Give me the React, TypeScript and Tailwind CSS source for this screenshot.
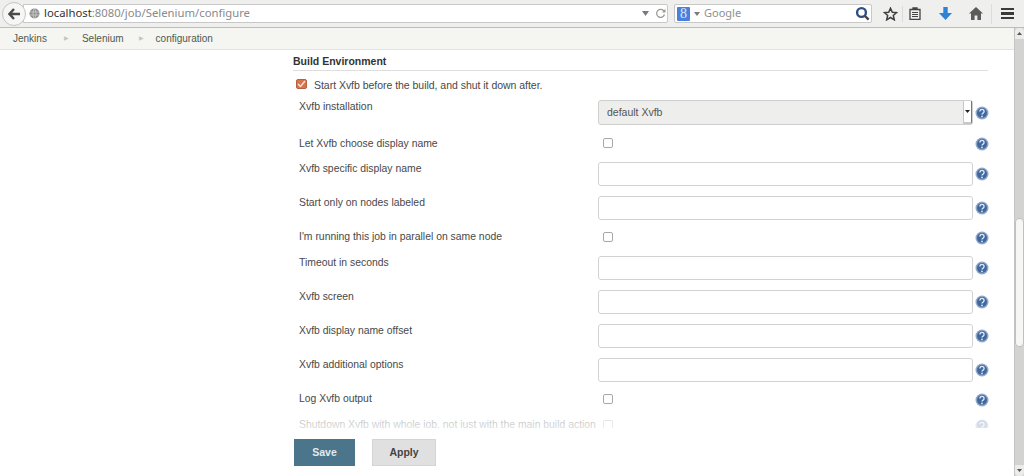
import React from 'react';

function HelpIcon() {
  return (
    <svg width="14" height="14" viewBox="0 0 14 14" className="shrink-0">
      <circle cx="7" cy="7" r="6.5" fill="#8fa6c9" />
      <circle cx="7" cy="7" r="5" fill="#3f689f" />
      <path d="M4.9 5.4a2.1 2 0 1 1 3.2 1.7c-.7.4-1.1.8-1.1 1.5" fill="none" stroke="#dfe8f3" strokeWidth="1.4" />
      <circle cx="7" cy="10.4" r="0.9" fill="#dfe8f3" />
    </svg>
  );
}

function Checkbox() {
  return <span className="block w-[10px] h-[10px] border border-[#a8a8a8] rounded-[2px] bg-white" />;
}

// input rows are 34px apart, checkbox rows sit in whatever is left
function Row({ label, kind, height, labelPad }: { label: string; kind: 'input' | 'check'; height: string; labelPad: string }) {
  return (
    <div className={`flex ${height}`}>
      <div className={`w-[299px] ${labelPad} leading-[13px] text-[10.4px] text-[#484848] whitespace-nowrap`}>{label}</div>
      {kind === 'input' ? (
        <>
          <div className="w-[375px] h-[24px] border border-[#d2d2d2] rounded-[3px] bg-white" />
          <div className="ml-[2px] pt-[5px]"><HelpIcon /></div>
        </>
      ) : (
        <>
          <div className="w-[375px] pl-[5px] pt-[2px]"><Checkbox /></div>
          <div className="ml-[2px] pt-px"><HelpIcon /></div>
        </>
      )}
    </div>
  );
}

export default function App() {
  return (
    <div className="h-[476px] w-[1024px] overflow-hidden flex flex-col bg-white font-['Liberation_Sans',Arial,sans-serif] text-[10.5px]">
      {/* browser toolbar */}
      <div className="h-[28px] shrink-0 flex items-center bg-[#efefee] border-b border-[#bdbdbb] pr-[9px]">
        <div className="ml-[2px] w-[24px] h-[24px] rounded-full border border-[#c4c4c4] bg-[#f6f6f5] flex items-center justify-center z-10">
          <svg width="13" height="12" viewBox="0 0 13 12">
            <path d="M6 1 1.5 6 6 11M2 6h10" fill="none" stroke="#4a4a4a" strokeWidth="2.4" />
          </svg>
        </div>
        <div className="ml-[-3px] w-[645px] h-[19px] flex items-center bg-white border border-[#c8c8c8] rounded-r-[2px] pl-[5px] pr-[1px]">
          <svg width="11" height="11" viewBox="0 0 11 11">
            <circle cx="5.5" cy="5.5" r="5" fill="#8c8c8c" />
            <path d="M1 4h9M1 7h9M5.5.5c-2 3-2 7 0 10M5.5.5c2 3 2 7 0 10" fill="none" stroke="#d8d8d8" strokeWidth="0.7" />
          </svg>
          <div className="ml-[4px] text-[11.3px] font-['Noto_Sans',sans-serif] flex-1 whitespace-nowrap">
            <span className="text-[#333]">localhost</span>
            <span className="text-[#8a8a8a]">:8080/job/Selenium/configure</span>
          </div>
          <svg width="7" height="5" viewBox="0 0 7 5" className="mr-[6px]"><path d="M0 0h7L3.5 5z" fill="#7a7a7a" /></svg>
          <svg width="11" height="11" viewBox="0 0 11 11">
            <path d="M9 3.2A4 4 0 1 0 9.5 6.5" fill="none" stroke="#9a9a9a" strokeWidth="1.3" />
            <path d="M10.5 0.8V4.5H7z" fill="#9a9a9a" />
          </svg>
        </div>
        <div className="ml-[6px] w-[198px] h-[19px] flex items-center bg-white border border-[#c8c8c8] rounded-[2px] pl-[2px] pr-[1px]">
          <span className="w-[13px] h-[14px] bg-[#4a7fdb] text-[#dfe9fa] rounded-[1px] flex items-center justify-center text-[14px] font-['Liberation_Serif',serif]">8</span>
          <svg width="6" height="4" viewBox="0 0 6 4" className="ml-[4px]"><path d="M0 0h6L3 4z" fill="#7a7a7a" /></svg>
          <span className="ml-[4px] flex-1 text-[11px] text-[#8f8f8f] font-['Noto_Sans',sans-serif]">Google</span>
          <svg width="15" height="15" viewBox="0 0 15 15">
            <circle cx="6.5" cy="6.5" r="4.4" fill="#fff" stroke="#2f4d84" strokeWidth="2.4" />
            <path d="M10 10l3.6 3.6" stroke="#444" strokeWidth="2.4" />
          </svg>
        </div>
        <svg width="15" height="14" viewBox="0 0 15 14" className="ml-[11px]">
          <path d="M7.5 1.2 9.3 5.2l4.3.4-3.3 2.9 1 4.3-3.8-2.3-3.8 2.3 1-4.3L1.4 5.6l4.3-.4z" fill="none" stroke="#3f3f3f" strokeWidth="1.5" />
        </svg>
        <div className="ml-[4px] w-px h-[16px] bg-[#dcdcdc]" />
        <svg width="12" height="13" viewBox="0 0 12 13" className="ml-[6px]">
          <path d="M4 2h4V1H4zM1 2.5h10v10H1z" fill="none" stroke="#444" strokeWidth="1.3" />
          <path d="M3 5.5h6M3 7.5h6M3 9.5h6" stroke="#444" strokeWidth="1.2" />
        </svg>
        <svg width="13" height="13" viewBox="0 0 13 13" className="ml-[18px]">
          <path d="M4.3 0h4.4v6H13L6.5 13 0 6h4.3z" fill="#2f83d6" />
        </svg>
        <svg width="14" height="13" viewBox="0 0 14 13" className="ml-[17px]">
          <path d="M7 0 0 6.5h2V13h3.6V8.5h2.8V13H12V6.5h2z" fill="#5c5c5c" />
        </svg>
        <div className="ml-[8px] w-px h-[20px] bg-[#dcdcdc]" />
        <div className="ml-[9px] w-[13px] flex flex-col gap-[2px]">
          <span className="h-[2.5px] bg-[#3a3a3a]" />
          <span className="h-[2.5px] bg-[#3a3a3a]" />
          <span className="h-[2.5px] bg-[#3a3a3a]" />
        </div>
      </div>

      <div className="flex-1 min-h-0 flex">
        <div className="flex-1 min-w-0 flex flex-col">
          {/* breadcrumb */}
          <div className="h-[22px] shrink-0 flex items-center bg-[#f5f6f1] border-b border-[#e3e5dc] pl-[13px] text-[10px] text-[#4f5a4f]">
            <span>Jenkins</span>
            <span className="ml-[17px] text-[6px] text-[#c4c4c4]">▶</span>
            <span className="ml-[13px]">Selenium</span>
            <span className="ml-[15px] text-[6px] text-[#c4c4c4]">▶</span>
            <span className="ml-[12px]">configuration</span>
          </div>

          {/* form, clipped at the sticky button bar */}
          <div className="relative h-[378px] shrink-0 overflow-hidden pl-[293px]">
            <div className="pt-[5px] h-[15px] box-content font-bold text-[#333] border-b border-[#dedede] w-[695px] leading-[12px] pb-0">Build Environment</div>
            <div className="flex items-center h-[29px] pl-[3px]">
              <span className="w-[11px] h-[10px] -mt-[3px] rounded-[2px] bg-[#d9734c] border border-[#b85f3d] flex items-center justify-center">
                <svg width="9" height="8" viewBox="0 0 9 8"><path d="M1 4l2.5 2.5L8 1" fill="none" stroke="#f6e3da" strokeWidth="1.5" /></svg>
              </span>
              <span className="ml-[7px] text-[#484848] tracking-[-0.03px]">Start Xvfb before the build, and shut it down after.</span>
            </div>
            <div className="pl-[6px]">
              <div className="flex h-[36px]">
                <div className="w-[299px] leading-[13px] text-[#484848]">Xvfb installation</div>
                <div className="w-[375px] h-[25px] flex items-center justify-between bg-[#eeeeec] border border-[#cfcfcf] rounded-[3px] pl-[8px] text-[#555]">
                  default Xvfb
                  <span className="h-full w-[9px] bg-white border-l border-r border-b-2 border-[#c8c8c8] border-r-[#777] flex items-center justify-center">
                    <svg width="5" height="3" viewBox="0 0 5 3"><path d="M0 0h5L2.5 3z" fill="#222" /></svg>
                  </span>
                </div>
                <div className="ml-[2px] pt-[6px]"><HelpIcon /></div>
              </div>
              <Row label="Let Xvfb choose display name" kind="check" height="h-[26px]" labelPad="pt-[1px]" />
              <Row label="Xvfb specific display name" kind="input" height="h-[34px]" labelPad="pt-0" />
              <Row label="Start only on nodes labeled" kind="input" height="h-[34px]" labelPad="pt-0" />
              <Row label="I'm running this job in parallel on same node" kind="check" height="h-[26px]" labelPad="pt-0" />
              <Row label="Timeout in seconds" kind="input" height="h-[34px]" labelPad="pt-0" />
              <Row label="Xvfb screen" kind="input" height="h-[34px]" labelPad="pt-0" />
              <Row label="Xvfb display name offset" kind="input" height="h-[34px]" labelPad="pt-0" />
              <Row label="Xvfb additional options" kind="input" height="h-[34px]" labelPad="pt-0" />
              <Row label="Log Xvfb output" kind="check" height="h-[26px]" labelPad="pt-0" />
              <Row label="Shutdown Xvfb with whole job, not just with the main build action" kind="check" height="h-[26px]" labelPad="pt-0" />
            </div>
            <div className="absolute left-0 right-0 bottom-0 h-[14px] bg-gradient-to-b from-white/60 to-white/80" />
          </div>

          {/* button bar */}
          <div className="flex-1 flex items-start pl-[294px] pt-[11px] gap-[17px] bg-white">
            <div className="w-[61px] h-[27px] flex items-center justify-center bg-[#4b758b] font-bold text-[#e3eaee]">Save</div>
            <div className="w-[64px] h-[27px] flex items-center justify-center bg-[#e0e0e0] border border-[#d4d4d4] font-bold text-[#444]">Apply</div>
          </div>
        </div>

        {/* scrollbar */}
        <div className="w-[10px] shrink-0 bg-[#d3d3d1] border-l border-[#c4c4c4] flex flex-col">
          <div className="h-[11px] bg-[#ececeb] rounded-t-[4px] flex items-center justify-center">
            <svg width="5" height="3" viewBox="0 0 5 3"><path d="M0 3h5L2.5 0z" fill="#555" /></svg>
          </div>
          <div className="mt-[179px] h-[129px] bg-[#f6f6f5] border border-[#c0c0c0] rounded-[4px]" />
          <div className="mt-auto h-[11px] bg-[#ececeb] rounded-b-[4px] flex items-center justify-center">
            <svg width="5" height="3" viewBox="0 0 5 3"><path d="M0 0h5L2.5 3z" fill="#555" /></svg>
          </div>
        </div>
      </div>
    </div>
  );
}
